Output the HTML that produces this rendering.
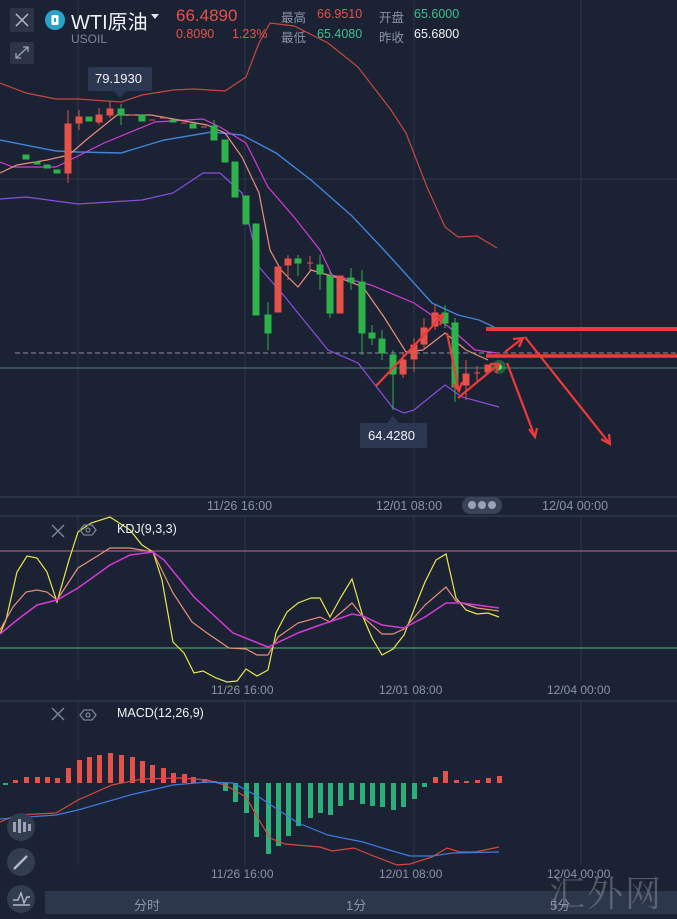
<!DOCTYPE html>
<html><head><meta charset="utf-8"><style>
html,body{margin:0;padding:0;background:#1b2233;}
body{width:677px;height:919px;overflow:hidden;position:relative;font-family:"Liberation Sans","Noto Sans CJK SC",sans-serif;}
.t{position:absolute;white-space:nowrap;}
svg{position:absolute;left:0;top:0;}
</style></head><body>
<svg width="677" height="919" viewBox="0 0 677 919">
<rect width="677" height="919" fill="#1b2233"/>
<!-- grid -->
<g stroke="#2c3548" stroke-width="1">
<line x1="78" y1="0" x2="78" y2="497"/><line x1="245" y1="0" x2="245" y2="497"/><line x1="414" y1="0" x2="414" y2="497"/><line x1="581" y1="0" x2="581" y2="497"/>
<line x1="0" y1="179" x2="677" y2="179"/>
<line x1="78" y1="517" x2="78" y2="680"/><line x1="245" y1="517" x2="245" y2="680"/><line x1="414" y1="517" x2="414" y2="680"/><line x1="581" y1="517" x2="581" y2="680"/>
<line x1="78" y1="702" x2="78" y2="865"/><line x1="245" y1="702" x2="245" y2="865"/><line x1="414" y1="702" x2="414" y2="865"/><line x1="581" y1="702" x2="581" y2="865"/>
</g>
<g stroke="#3a445a" stroke-width="1"><line x1="0" y1="497" x2="677" y2="497"/><line x1="0" y1="516" x2="677" y2="516"/><line x1="0" y1="701" x2="677" y2="701"/></g>
<!-- price lines -->
<line x1="15" y1="353" x2="677" y2="353" stroke="#8a93a6" stroke-dasharray="5,3" stroke-width="1"/>
<line x1="0" y1="368" x2="677" y2="368" stroke="#4a8a7a" stroke-width="1"/>
<!-- bollinger & MAs -->
<g fill="none" stroke-width="1.2">
<polyline stroke="#c8483f" points="0,83 26,93 56,99 78,99 121,102 142,95 173,90 194,89 225,91 246,77 259,43 270,23 294,26 328,43 358,67 391,110 406,133 427,187 445,227 458,237 477,236 497,248"/>
<polyline stroke="#3f86db" stroke-width="1.4" points="0,140 56,151 78,152 121,153 164,140 212,132 242,135 276,153 311,180 352,216 384,250 432,303 458,315 479,320 494,327"/>
<polyline stroke="#8a4ee0" points="0,199 26,197 78,204 142,200 173,193 203,173 220,173 242,193 259,267 285,297 328,350 358,363 393,408 404,413 414,410 445,385 462,397 499,407"/>
<polyline stroke="#d63ad6" points="0,162 13,167 56,167 104,143 155,122 203,119 220,127 246,143 268,187 294,217 320,250 332,275 371,285 414,303 449,327 475,350 497,353"/>
<polyline stroke="#e8907a" points="0,173 17,165 47,160 69,155 86,140 117,115 151,115 207,125 225,133 242,157 259,193 270,250 281,270 298,287 311,270 345,280 363,287 384,317 406,352 423,350 445,333 466,350 488,360"/>
</g>
<!-- candles -->
<g>
<g fill="#2db34a" stroke="#2db34a">
<rect x="23" y="155" width="6" height="4"/><rect x="34" y="162" width="6" height="2"/><rect x="44" y="165" width="6" height="3"/><rect x="54" y="170" width="6" height="3"/>
<rect x="86" y="117" width="6" height="4"/><rect x="118" y="109" width="6" height="6"/><line x1="121" y1="104" x2="121" y2="125"/>
<rect x="139" y="115" width="6" height="6"/><rect x="170" y="120" width="6" height="2"/><rect x="190" y="124" width="6" height="4"/>
<rect x="211" y="126" width="6" height="14"/><line x1="214" y1="120" x2="214" y2="140"/>
<rect x="222" y="140" width="6" height="22"/><rect x="232" y="162" width="6" height="35"/><rect x="243" y="196" width="6" height="28"/>
<rect x="253" y="224" width="6" height="91"/><rect x="265" y="315" width="6" height="18"/><line x1="268" y1="302" x2="268" y2="350"/>
<rect x="295" y="259" width="6" height="4"/><line x1="298" y1="255" x2="298" y2="276"/>
<rect x="317" y="265" width="6" height="9"/><line x1="320" y1="255" x2="320" y2="290"/>
<rect x="327" y="276" width="6" height="37"/><line x1="330" y1="270" x2="330" y2="318"/>
<rect x="348" y="278" width="6" height="4"/><line x1="351" y1="268" x2="351" y2="290"/>
<rect x="359" y="282" width="6" height="51"/><line x1="362" y1="270" x2="362" y2="355"/>
<rect x="369" y="333" width="6" height="5"/><line x1="372" y1="325" x2="372" y2="345"/>
<rect x="379" y="339" width="6" height="14"/><line x1="382" y1="330" x2="382" y2="360"/>
<rect x="390" y="355" width="6" height="19"/><line x1="393" y1="350" x2="393" y2="410"/>
<rect x="442" y="313" width="6" height="10"/><line x1="445" y1="305" x2="445" y2="328"/>
<rect x="452" y="323" width="6" height="64"/><line x1="455" y1="318" x2="455" y2="402"/>
</g>
<g fill="#e5524a" stroke="#e5524a">
<rect x="65" y="124" width="6" height="49"/><line x1="68" y1="110" x2="68" y2="183"/>
<rect x="76" y="117" width="6" height="6"/><line x1="79" y1="110" x2="79" y2="130"/>
<rect x="96" y="115" width="6" height="7"/><line x1="99" y1="108" x2="99" y2="125"/>
<rect x="107" y="109" width="6" height="6"/><line x1="110" y1="102" x2="110" y2="118"/>
<line x1="129" y1="115" x2="135" y2="115"/><line x1="149" y1="120" x2="155" y2="120"/><line x1="160" y1="118" x2="166" y2="118"/><line x1="181" y1="123" x2="187" y2="123"/><line x1="201" y1="127" x2="207" y2="127"/>
<rect x="275" y="267" width="6" height="45"/>
<rect x="285" y="259" width="6" height="6"/><line x1="288" y1="255" x2="288" y2="280"/>
<line x1="307" y1="263" x2="313" y2="263"/><line x1="310" y1="256" x2="310" y2="270"/>
<rect x="337" y="276" width="6" height="37"/>
<rect x="400" y="360" width="6" height="14"/><line x1="403" y1="352" x2="403" y2="378"/>
<rect x="411" y="345" width="6" height="14"/><line x1="414" y1="338" x2="414" y2="372"/>
<rect x="421" y="328" width="6" height="16"/><line x1="424" y1="318" x2="424" y2="350"/>
<rect x="432" y="313" width="6" height="13"/><line x1="435" y1="305" x2="435" y2="330"/>
<rect x="463" y="374" width="6" height="11"/><line x1="466" y1="360" x2="466" y2="400"/>
<line x1="474" y1="373" x2="480" y2="373"/><line x1="477" y1="366" x2="477" y2="382"/>
<rect x="485" y="365" width="6" height="7"/>
</g>
<circle cx="499" cy="367" r="7" fill="#2fd84a" opacity="0.35"/><circle cx="499" cy="367" r="3" fill="#4af06a"/>
</g>
<!-- red annotations -->
<g stroke="#ee3a3a" fill="none">
<line x1="486" y1="329" x2="677" y2="329" stroke-width="4"/>
<line x1="486" y1="356" x2="677" y2="356" stroke-width="3.5"/>
<g stroke-width="2.2">
<line x1="376" y1="386" x2="443" y2="315"/><polyline points="433,317 443,315 440,325"/>
<line x1="447" y1="333" x2="459" y2="391"/><polyline points="453,384 459,391 462,382"/>
<line x1="458" y1="398" x2="499" y2="364"/><polyline points="490,364 499,364 496,373"/>
<line x1="505" y1="352" x2="523" y2="338"/><polyline points="513,339 523,338 519,347"/>
<line x1="525" y1="337" x2="610" y2="444"/><polyline points="601,439 610,444 609,434"/>
<line x1="507" y1="363" x2="535" y2="437"/><polyline points="529,429 535,437 537,428"/>
</g></g>
<!-- labels -->
<rect x="88" y="67" width="64" height="24" rx="2" fill="#2c3852"/><polygon points="114,91 126,91 120,98" fill="#2c3852"/>
<rect x="360" y="423" width="67" height="25" rx="2" fill="#2c3852"/><polygon points="387,423 399,423 393,416" fill="#2c3852"/>
<rect x="462" y="497" width="40" height="17" rx="8" fill="#3a4458"/>
<circle cx="472" cy="505" r="4" fill="#9aa3b5"/><circle cx="482" cy="505" r="4" fill="#9aa3b5"/><circle cx="492" cy="505" r="4" fill="#9aa3b5"/>
<!-- KDJ -->
<line x1="0" y1="551" x2="677" y2="551" stroke="#c46a8a" stroke-width="1"/>
<line x1="0" y1="648" x2="677" y2="648" stroke="#5ab87a" stroke-width="1"/>
<g fill="none" stroke-width="1.2">
<polyline stroke="#e8e84a" points="0,634 6,620 17,572 27,556 37,558 47,572 57,602 69,560 78,532 91,523 110,517 130,530 142,545 153,552 162,580 173,642 184,653 194,673 203,671 216,678 227,682 237,681 246,669 257,676 268,670 276,633 287,612 298,603 311,598 320,598 330,617 341,597 352,579 363,617 372,638 382,655 393,649 404,635 415,607 425,582 436,560 446,554 456,598 466,610 477,614 488,613 499,617"/>
<polyline stroke="#e8907a" points="0,630 13,607 26,592 37,590 47,592 57,600 78,568 99,555 110,548 130,548 153,552 173,593 192,622 207,633 229,648 246,649 257,655 268,655 278,637 298,623 320,617 330,622 352,603 363,617 382,634 393,634 404,629 425,605 446,587 456,601 477,608 499,611"/>
<polyline stroke="#d63ad6" stroke-width="1.5" points="0,634 17,620 37,605 57,600 78,588 110,565 130,555 153,552 164,560 194,597 233,633 268,647 298,633 320,625 341,618 352,614 363,616 382,625 404,628 425,617 446,603 462,603 499,608"/>
</g>
<!-- MACD bars -->
<g fill="#e5524a">
<rect x="13" y="780" width="5" height="3"/><rect x="24" y="777" width="5" height="6"/><rect x="35" y="777" width="5" height="6"/><rect x="45" y="777" width="5" height="6"/><rect x="55" y="778" width="5" height="5"/><rect x="66" y="768" width="5" height="15"/><rect x="77" y="760" width="5" height="23"/><rect x="87" y="757" width="5" height="26"/><rect x="97" y="755" width="5" height="28"/><rect x="108" y="753" width="5" height="30"/><rect x="119" y="755" width="5" height="28"/><rect x="130" y="757" width="5" height="26"/><rect x="140" y="761" width="5" height="22"/><rect x="150" y="765" width="5" height="18"/><rect x="161" y="768" width="5" height="15"/><rect x="171" y="773" width="5" height="10"/><rect x="182" y="774" width="5" height="9"/><rect x="191" y="777" width="5" height="6"/><rect x="202" y="779" width="5" height="4"/><rect x="212" y="781" width="5" height="2"/>
<rect x="433" y="777" width="5" height="6"/><rect x="443" y="771" width="5" height="12"/><rect x="454" y="780" width="5" height="3"/><rect x="464" y="781" width="5" height="2"/><rect x="475" y="780" width="5" height="3"/><rect x="486" y="778" width="5" height="5"/><rect x="497" y="776" width="5" height="7"/>
</g>
<g fill="#2bb07a">
<rect x="3" y="783" width="5" height="2"/>
<rect x="223" y="783" width="5" height="8"/><rect x="233" y="783" width="5" height="19"/><rect x="244" y="783" width="5" height="30"/><rect x="254" y="783" width="5" height="54"/><rect x="266" y="783" width="5" height="71"/><rect x="276" y="783" width="5" height="63"/><rect x="286" y="783" width="5" height="53"/><rect x="296" y="783" width="5" height="43"/><rect x="308" y="783" width="5" height="35"/><rect x="318" y="783" width="5" height="30"/><rect x="328" y="783" width="5" height="32"/><rect x="338" y="783" width="5" height="23"/><rect x="349" y="783" width="5" height="17"/><rect x="360" y="783" width="5" height="21"/><rect x="370" y="783" width="5" height="23"/><rect x="380" y="783" width="5" height="24"/><rect x="391" y="783" width="5" height="27"/><rect x="401" y="783" width="5" height="24"/><rect x="412" y="783" width="5" height="16"/><rect x="422" y="783" width="5" height="4"/>
</g>
<g fill="none" stroke-width="1.2">
<polyline stroke="#d8483f" points="0,822 17,815 56,813 78,800 112,785 142,779 181,778 207,780 225,785 246,797 259,820 270,838 285,844 320,847 332,851 354,848 371,855 397,865 410,864 432,857 447,848 460,852 475,852 499,847"/>
<polyline stroke="#3f7ae0" points="0,819 56,815 78,810 130,795 173,785 207,782 233,783 259,797 298,823 328,835 363,842 389,850 410,856 432,856 453,853 499,852"/>
</g>
<!-- left tools -->
<rect x="10" y="8" width="24" height="24" rx="2" fill="#2c3446"/>
<path d="M16 14 L28 26 M28 14 L16 26" stroke="#b0b8c8" stroke-width="1.5"/>
<rect x="10" y="42" width="24" height="22" rx="2" fill="#2c3446"/>
<path d="M16 58 L28 47 M23 47 L28 47 L28 52 M16 53 L16 58 L21 58" stroke="#9aa3b5" stroke-width="1.3" fill="none"/>
<circle cx="55" cy="20" r="10" fill="#2aa3c8"/><rect x="51.5" y="15" width="7" height="10" rx="1.5" fill="#fff"/><rect x="54" y="18" width="2" height="4" fill="#2aa3c8"/>
<path d="M151 14 L159 14 L155 19 Z" fill="#e0e4ec"/>
<g stroke="#7a8498" stroke-width="1.5"><path d="M52 525 L64 537 M64 525 L52 537"/><path d="M52 708 L64 720 M64 708 L52 720"/></g>
<g stroke="#7a8498" stroke-width="1.3" fill="none"><polygon points="84,525 92,525 96,530 92,535 84,535 80,530"/><circle cx="88" cy="530" r="2"/><polygon points="84,710 92,710 96,715 92,720 84,720 80,715"/><circle cx="88" cy="715" r="2"/></g>
<rect x="45" y="891" width="632" height="23" fill="#2c374c"/>
<g fill="#333d50"><circle cx="21" cy="827" r="14"/><circle cx="21" cy="862" r="14"/><circle cx="21" cy="899" r="14"/></g>
<g fill="#9aa3b5"><rect x="13" y="822" width="3" height="10"/><rect x="18" y="819" width="3" height="14"/><rect x="23" y="822" width="3" height="10"/><rect x="28" y="824" width="3" height="7"/></g>
<path d="M14 869 L27 856" stroke="#b0b8c8" stroke-width="2.5"/>
<path d="M13 900 L18 900 L21 893 L24 903 L27 897 L30 897 M13 905 L30 905" stroke="#b0b8c8" stroke-width="1.4" fill="none"/>
</svg>
<div class="t" style="left:71px;top:6px;font-size:20px;color:#f0f2f6;">WTI原油</div>
<div class="t" style="left:71px;top:32px;font-size:12px;color:#7d8699;">USOIL</div>
<div class="t" style="left:176px;top:6px;font-size:17px;color:#e5524a;">66.4890</div>
<div class="t" style="left:176px;top:27px;font-size:12.5px;color:#e5524a;">0.8090</div>
<div class="t" style="left:232px;top:27px;font-size:12.5px;color:#e5524a;">1.23%</div>
<div class="t" style="left:281px;top:7px;font-size:12.5px;color:#8a93a6;">最高</div>
<div class="t" style="left:317px;top:7px;font-size:12.5px;color:#e5524a;">66.9510</div>
<div class="t" style="left:379px;top:7px;font-size:12.5px;color:#8a93a6;">开盘</div>
<div class="t" style="left:414px;top:7px;font-size:12.5px;color:#3fbf8a;">65.6000</div>
<div class="t" style="left:281px;top:27px;font-size:12.5px;color:#8a93a6;">最低</div>
<div class="t" style="left:317px;top:27px;font-size:12.5px;color:#3fbf8a;">65.4080</div>
<div class="t" style="left:379px;top:27px;font-size:12.5px;color:#8a93a6;">昨收</div>
<div class="t" style="left:414px;top:27px;font-size:12.5px;color:#f0f2f6;">65.6800</div>
<div class="t" style="left:95px;top:71px;font-size:13px;color:#f0f2f6;">79.1930</div>
<div class="t" style="left:368px;top:428px;font-size:13px;color:#f0f2f6;">64.4280</div>
<div class="t" style="left:207px;top:499px;font-size:12.5px;color:#8a93a6;">11/26 16:00</div>
<div class="t" style="left:376px;top:499px;font-size:12.5px;color:#8a93a6;">12/01 08:00</div>
<div class="t" style="left:542px;top:499px;font-size:12.5px;color:#8a93a6;">12/04 00:00</div>
<div class="t" style="left:117px;top:522px;font-size:12.5px;color:#f0f2f6;">KDJ(9,3,3)</div>
<div class="t" style="left:211px;top:683px;font-size:12px;color:#8a93a6;">11/26 16:00</div>
<div class="t" style="left:379px;top:683px;font-size:12px;color:#8a93a6;">12/01 08:00</div>
<div class="t" style="left:547px;top:683px;font-size:12px;color:#8a93a6;">12/04 00:00</div>
<div class="t" style="left:117px;top:706px;font-size:12.5px;color:#f0f2f6;">MACD(12,26,9)</div>
<div class="t" style="left:211px;top:867px;font-size:12px;color:#8a93a6;">11/26 16:00</div>
<div class="t" style="left:379px;top:867px;font-size:12px;color:#8a93a6;">12/01 08:00</div>
<div class="t" style="left:547px;top:867px;font-size:12px;color:#8a93a6;">12/04 00:00</div>
<div class="t" style="left:134px;top:895px;font-size:13px;color:#8a93a6;">分时</div>
<div class="t" style="left:346px;top:895px;font-size:13px;color:#8a93a6;">1分</div>
<div class="t" style="left:550px;top:895px;font-size:13px;color:#8a93a6;">5分</div>
<div class="t" style="left:549px;top:866px;font-size:36px;color:rgba(150,155,165,0.45);font-family:'Noto Serif CJK SC',serif;letter-spacing:2px;">汇外网</div>
</body></html>
